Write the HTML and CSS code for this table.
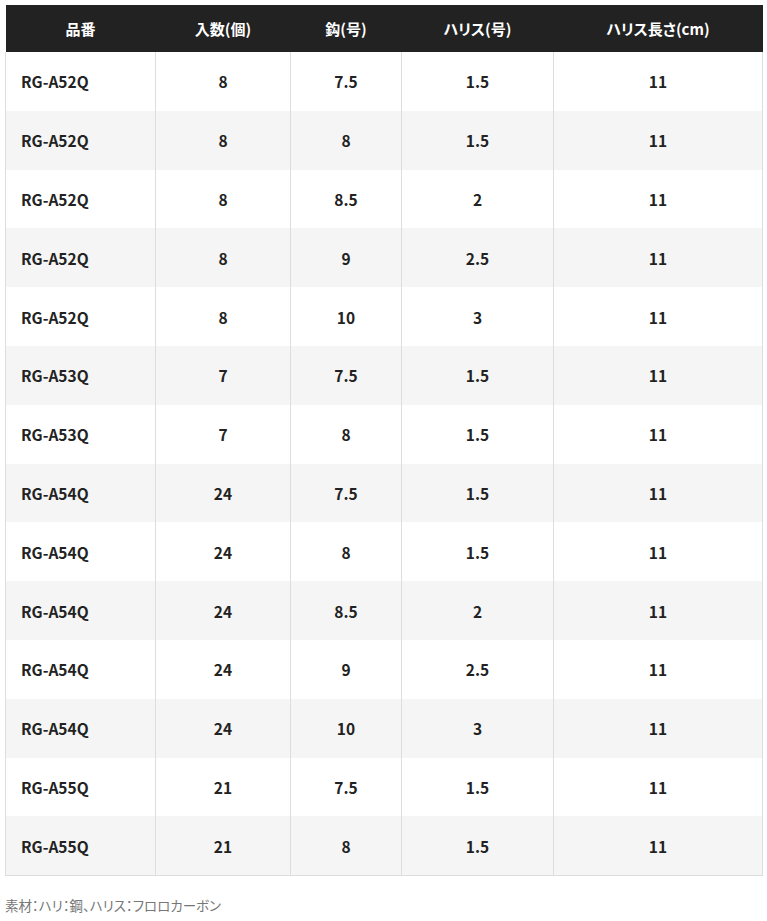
FILE: index.html
```html
<!DOCTYPE html>
<html lang="ja">
<head>
<meta charset="utf-8">
<link rel="stylesheet" href="styles.css">
</head>
<body>
<div class="wrap">
<table class="spec">
<colgroup>
<col class="c1"><col class="c2"><col class="c3"><col class="c4"><col class="c5">
</colgroup>
<thead>
<tr><th>品番</th><th>入数(個)</th><th>鈎(号)</th><th>ハリス(号)</th><th>ハリス長さ(cm)</th></tr>
</thead>
<tbody>
<tr><td>RG-A52Q</td><td>8</td><td>7.5</td><td>1.5</td><td>11</td></tr>
<tr><td>RG-A52Q</td><td>8</td><td>8</td><td>1.5</td><td>11</td></tr>
<tr><td>RG-A52Q</td><td>8</td><td>8.5</td><td>2</td><td>11</td></tr>
<tr><td>RG-A52Q</td><td>8</td><td>9</td><td>2.5</td><td>11</td></tr>
<tr><td>RG-A52Q</td><td>8</td><td>10</td><td>3</td><td>11</td></tr>
<tr><td>RG-A53Q</td><td>7</td><td>7.5</td><td>1.5</td><td>11</td></tr>
<tr><td>RG-A53Q</td><td>7</td><td>8</td><td>1.5</td><td>11</td></tr>
<tr><td>RG-A54Q</td><td>24</td><td>7.5</td><td>1.5</td><td>11</td></tr>
<tr><td>RG-A54Q</td><td>24</td><td>8</td><td>1.5</td><td>11</td></tr>
<tr><td>RG-A54Q</td><td>24</td><td>8.5</td><td>2</td><td>11</td></tr>
<tr><td>RG-A54Q</td><td>24</td><td>9</td><td>2.5</td><td>11</td></tr>
<tr><td>RG-A54Q</td><td>24</td><td>10</td><td>3</td><td>11</td></tr>
<tr><td>RG-A55Q</td><td>21</td><td>7.5</td><td>1.5</td><td>11</td></tr>
<tr><td>RG-A55Q</td><td>21</td><td>8</td><td>1.5</td><td>11</td></tr>
</tbody>
</table>
<p class="note">素材：ハリ：鋼、ハリス：フロロカーボン</p>
</div>
</body>
</html>
```

FILE: styles.css
```css
html, body {
  margin: 0;
  padding: 0;
  background: #fff;
}
body {
  font-family: "Noto Sans CJK JP", "Noto Sans", sans-serif;
  color: #222;
}
.wrap {
  padding: 5px 5px 0 5px;
}
.spec {
  width: 757px;
  border-collapse: collapse;
  table-layout: fixed;
  font-size: 15.5px;
  font-weight: 700;
}
.c1 { width: 150px; }
.c2 { width: 135px; }
.c3 { width: 111px; }
.c4 { width: 152px; }
.c5 { width: 209px; }
.spec th {
  background: #222;
  color: #fff;
  height: 47px;
  padding: 0;
  font-size: 15px;
  text-align: center;
  border: 0;
  font-feature-settings: "palt";
}
.spec td {
  height: 58.8px;
  padding: 0;
  text-align: center;
  border-left: 1px solid #ddd;
  border-right: 1px solid #ddd;
}
.spec td:first-child {
  text-align: left;
  padding-left: 15px;
}
.spec tbody tr:nth-child(even) td {
  background: #f5f5f5;
}
.spec tbody tr:last-child td {
  border-bottom: 1px solid #ddd;
}
.note {
  margin: 19px 0 0 0;
  font-size: 13.5px;
  font-weight: 400;
  color: #777;
  font-feature-settings: "palt";
}
```
